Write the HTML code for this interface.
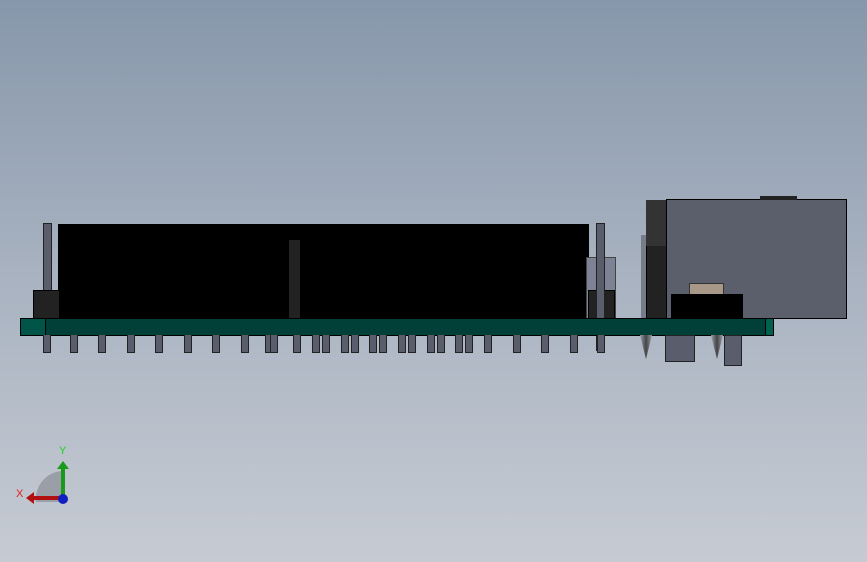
<!DOCTYPE html><html><head><style>
body{margin:0;width:867px;height:562px;overflow:hidden;background:linear-gradient(#8797ab,#a9b3c1 50%,#c6cbd3);position:relative;font-family:"Liberation Sans",sans-serif}
div{position:absolute;box-sizing:border-box}
.p{width:8px;top:335px;height:18px;background:#5a5e6c;border:1px solid #222;border-top:none}
</style></head><body>
<div style="left:43px;top:223px;width:9px;height:100px;background:#5a5e6c;border:1px solid #222"></div>
<div style="left:58px;top:224px;width:531px;height:95px;background:#000"></div>
<div style="left:33px;top:290px;width:27px;height:29px;background:#222;border:1px solid #000"></div>
<div style="left:288px;top:239px;width:13px;height:80px;background:#222;border:1px solid #000"></div>
<div style="left:586px;top:257px;width:30px;height:62px;background:#7d8395;border:1px solid #444"></div>
<div style="left:588px;top:290px;width:27px;height:29px;background:#222;border:1px solid #000"></div>
<div style="left:596px;top:223px;width:9px;height:128px;background:#5a5e6c;border:1px solid #222"></div>
<div style="left:641px;top:235px;width:6px;height:84px;background:#777c8a"></div>
<div style="left:646px;top:200px;width:21px;height:119px;background:#222;border:1px solid #000"></div>
<div style="left:646px;top:200px;width:21px;height:46px;background:#333"></div>
<div style="left:666px;top:199px;width:181px;height:120px;background:#5b5e6b;border:1px solid #000"></div>
<div style="left:760px;top:196px;width:37px;height:4px;background:#222"></div>
<div style="left:689px;top:283px;width:35px;height:12px;background:#a89888;border:1px solid #333"></div>
<div style="left:671px;top:294px;width:72px;height:25px;background:#000"></div>
<div style="left:20px;top:318px;width:754px;height:18px;background:#004038;border:1px solid #000"></div>
<div style="left:20px;top:318px;width:26px;height:18px;background:#005548;border:1px solid #000"></div>
<div style="left:765px;top:318px;width:9px;height:18px;background:#006050;border:1px solid #000"></div>
<div style="left:665px;top:335px;width:30px;height:27px;background:#5a5e6c;border:1px solid #222"></div>
<div style="left:724px;top:335px;width:18px;height:31px;background:#5a5e6c;border:1px solid #222"></div>
<div style="left:640px;top:335px;width:12px;height:24px;background:linear-gradient(90deg,#9aa0ac,#444,#9aa0ac);clip-path:polygon(0 0,100% 0,50% 100%)"></div>
<div style="left:711px;top:335px;width:12px;height:24px;background:linear-gradient(90deg,#9aa0ac,#444,#9aa0ac);clip-path:polygon(0 0,100% 0,50% 100%)"></div>
<div class="p" style="left:43px"></div><div class="p" style="left:70px"></div><div class="p" style="left:98px"></div><div class="p" style="left:127px"></div><div class="p" style="left:155px"></div><div class="p" style="left:184px"></div><div class="p" style="left:212px"></div><div class="p" style="left:241px"></div><div class="p" style="left:265px"></div><div class="p" style="left:270px"></div><div class="p" style="left:293px"></div><div class="p" style="left:312px"></div><div class="p" style="left:322px"></div><div class="p" style="left:341px"></div><div class="p" style="left:351px"></div><div class="p" style="left:369px"></div><div class="p" style="left:379px"></div><div class="p" style="left:398px"></div><div class="p" style="left:408px"></div><div class="p" style="left:427px"></div><div class="p" style="left:437px"></div><div class="p" style="left:455px"></div><div class="p" style="left:465px"></div><div class="p" style="left:484px"></div><div class="p" style="left:513px"></div><div class="p" style="left:541px"></div><div class="p" style="left:570px"></div><div class="p" style="left:597px"></div>
<svg style="position:absolute;left:0;top:430px" width="100" height="80">
<path d="M36 72 A28 28 0 0 1 62 41 L62 72 Z" fill="#9a9ea6"/>
<rect x="29" y="66" width="34" height="4" fill="#b01010"/><polygon points="26,68 34,62 34,74" fill="#b01010"/>
<rect x="61" y="38" width="4" height="32" fill="#1a9a1a"/><polygon points="63,31 57,39 69,39" fill="#1a9a1a"/>
<circle cx="63" cy="69" r="5" fill="#1020c0"/>
<text x="59" y="24" font-size="11" fill="#20d020">Y</text><text x="16" y="67" font-size="11" fill="#e02020">X</text>
</svg>
</body></html>
